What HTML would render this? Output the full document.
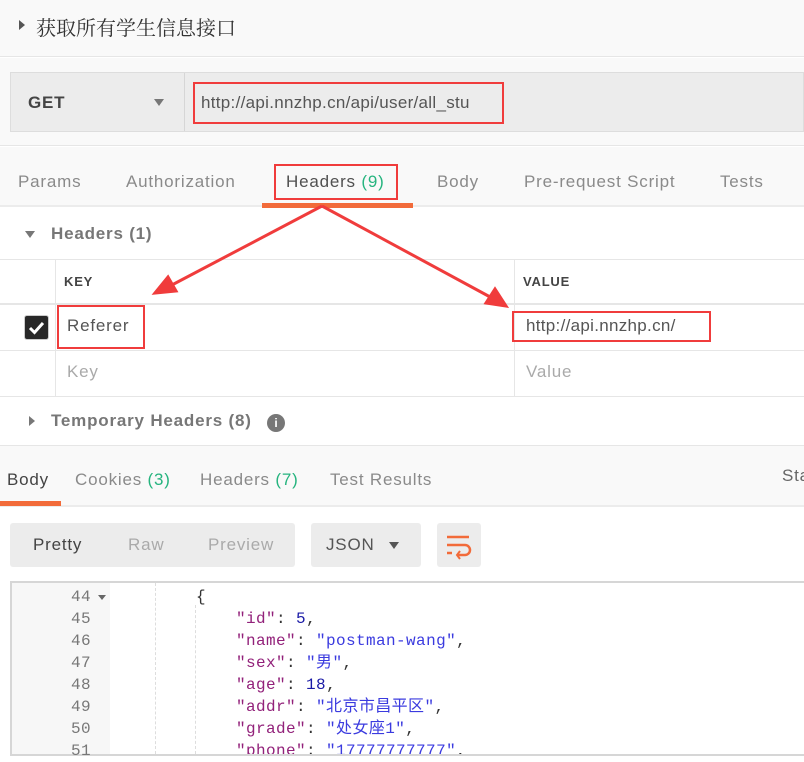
<!DOCTYPE html>
<html><head><meta charset="utf-8"><style>
*{margin:0;padding:0;box-sizing:border-box}
body{width:804px;height:758px;overflow:hidden;background:#fff;font-family:"Liberation Sans","Noto Sans CJK SC",sans-serif;position:relative;color:#505050;letter-spacing:0.8px}
.a{position:absolute;white-space:nowrap}
.red{position:absolute;border:2px solid #f03c3c}
.g{color:#26b47f}
.tab{font-size:17px;color:#8a8a8a;top:172px}
.code{font-family:"Liberation Mono","Noto Sans CJK SC",monospace;font-size:16px;line-height:22px;letter-spacing:0.4px}
.k{color:#92217a}.s{color:#3b3bdf}.n{color:#1a1aa6}
</style></head><body>
<div class="a" style="left:0;top:0;width:804px;height:57px;background:#f9f9f9;border-bottom:1px solid #e6e6e6"></div>
<div class="a" style="left:19px;top:20px;width:0;height:0;border-left:6px solid #555;border-top:5px solid transparent;border-bottom:5px solid transparent"></div>
<div class="a" style="left:36px;top:12px;font-size:20px;color:#333;letter-spacing:0;font-family:'Noto Serif CJK SC',serif">获取所有学生信息接口</div>
<div class="a" style="left:0;top:58px;width:804px;height:88px;background:#f9f9f9;border-bottom:1px solid #e6e6e6"></div>
<div class="a" style="left:10px;top:72px;width:794px;height:60px;background:#ececec;border:1px solid #ddd"></div>
<div class="a" style="left:184px;top:73px;width:1px;height:58px;background:#d6d6d6"></div>
<div class="a" style="left:28px;top:93px;font-size:17px;font-weight:bold;color:#444">GET</div>
<div class="a" style="left:154px;top:99px;border-top:7px solid #777;border-left:5px solid transparent;border-right:5px solid transparent"></div>
<div class="a" style="left:201px;top:93px;font-size:17px;color:#555;letter-spacing:0.3px">http://api.nnzhp.cn/api/user/all_stu</div>
<div class="red" style="left:193px;top:82px;width:311px;height:42px"></div>
<div class="a" style="left:0;top:147px;width:804px;height:60px;background:#f9f9f9;border-bottom:2px solid #ececec"></div>
<div class="a tab" style="left:18px">Params</div>
<div class="a tab" style="left:126px">Authorization</div>
<div class="a tab" style="left:286px;color:#505050">Headers <span class="g">(9)</span></div>
<div class="a tab" style="left:437px">Body</div>
<div class="a tab" style="left:524px">Pre-request Script</div>
<div class="a tab" style="left:720px">Tests</div>
<div class="a" style="left:262px;top:203px;width:151px;height:5px;background:#f26b3a"></div>
<div class="red" style="left:274px;top:164px;width:124px;height:36px"></div>
<div class="a" style="left:25px;top:231px;border-top:7px solid #777;border-left:5px solid transparent;border-right:5px solid transparent"></div>
<div class="a" style="left:51px;top:224px;font-size:17px;font-weight:bold;color:#777">Headers (1)</div>
<div class="a" style="left:0;top:259px;width:804px;height:1px;background:#e6e6e6"></div>
<div class="a" style="left:0;top:303px;width:804px;height:2px;background:#e6e6e6"></div>
<div class="a" style="left:0;top:350px;width:804px;height:1px;background:#e6e6e6"></div>
<div class="a" style="left:0;top:396px;width:804px;height:1px;background:#e6e6e6"></div>
<div class="a" style="left:55px;top:260px;width:1px;height:136px;background:#e6e6e6"></div>
<div class="a" style="left:514px;top:260px;width:1px;height:136px;background:#e6e6e6"></div>
<div class="a" style="left:64px;top:274px;font-size:13px;font-weight:bold;color:#444">KEY</div>
<div class="a" style="left:523px;top:274px;font-size:13px;font-weight:bold;color:#444">VALUE</div>
<div class="a" style="left:24px;top:315px;width:25px;height:25px;background:#282828;border-radius:3px;border:1px solid #ccc"></div>
<svg class="a" style="left:24px;top:315px" width="25" height="25"><path d="M6 13 L10.5 17.5 L19 8" stroke="#fff" stroke-width="3" fill="none"/></svg>
<div class="a" style="left:67px;top:316px;font-size:17px;color:#555">Referer</div>
<div class="red" style="left:57px;top:305px;width:88px;height:44px"></div>
<div class="a" style="left:526px;top:316px;font-size:17px;color:#555;letter-spacing:0.3px">http://api.nnzhp.cn/</div>
<div class="red" style="left:512px;top:311px;width:199px;height:31px"></div>
<div class="a" style="left:67px;top:362px;font-size:17px;color:#aaa">Key</div>
<div class="a" style="left:526px;top:362px;font-size:17px;color:#aaa">Value</div>
<div class="a" style="left:29px;top:416px;border-left:6px solid #777;border-top:5px solid transparent;border-bottom:5px solid transparent"></div>
<div class="a" style="left:51px;top:411px;font-size:17px;font-weight:bold;color:#777">Temporary Headers (8)</div>
<div class="a" style="left:267px;top:414px;width:18px;height:18px;border-radius:50%;background:#777;color:#fff;font-size:12px;font-weight:bold;text-align:center;line-height:18px;letter-spacing:0">i</div>
<div class="a" style="left:0;top:445px;width:804px;height:62px;background:#f9f9f9;border-top:1px solid #e6e6e6;border-bottom:2px solid #ececec"></div>
<div class="a" style="left:7px;top:470px;font-size:17px;color:#444">Body</div>
<div class="a" style="left:75px;top:470px;font-size:17px;color:#8a8a8a">Cookies <span class="g">(3)</span></div>
<div class="a" style="left:200px;top:470px;font-size:17px;color:#8a8a8a">Headers <span class="g">(7)</span></div>
<div class="a" style="left:330px;top:470px;font-size:17px;color:#8a8a8a">Test Results</div>
<div class="a" style="left:782px;top:466px;font-size:17px;color:#666">Sta</div>
<div class="a" style="left:0;top:501px;width:61px;height:5px;background:#f26b3a"></div>
<div class="a" style="left:10px;top:523px;width:285px;height:44px;background:#ececec;border-radius:3px"></div>
<div class="a" style="left:33px;top:535px;font-size:17px;color:#444">Pretty</div>
<div class="a" style="left:128px;top:535px;font-size:17px;color:#aaa">Raw</div>
<div class="a" style="left:208px;top:535px;font-size:17px;color:#aaa">Preview</div>
<div class="a" style="left:311px;top:523px;width:110px;height:44px;background:#ececec;border-radius:3px"></div>
<div class="a" style="left:326px;top:535px;font-size:17px;color:#555">JSON</div>
<div class="a" style="left:389px;top:542px;border-top:7px solid #555;border-left:5px solid transparent;border-right:5px solid transparent"></div>
<div class="a" style="left:437px;top:523px;width:44px;height:44px;background:#ececec;border-radius:3px"></div>
<svg class="a" style="left:437px;top:523px" width="44" height="44"><path d="M10 14h22M10 22h18a5 5 0 0 1 0 10h-7M10 30h5" stroke="#f26b3a" stroke-width="2.5" fill="none"/><path d="M23 28l-3 4 3 4" stroke="#f26b3a" stroke-width="2" fill="none"/></svg>
<div class="a" style="left:10px;top:581px;width:794px;height:175px;border:2px solid #d6d6d6;border-right:none;background:#fff"></div>
<div class="a" style="left:12px;top:583px;width:98px;height:171px;background:#f7f7f7"></div>
<div class="a" style="left:155px;top:583px;height:171px;border-left:1px dashed #ddd"></div>
<div class="a" style="left:195px;top:605px;height:149px;border-left:1px dashed #ddd"></div>
<div class="a code" style="left:40px;top:586px;width:51px;text-align:right;color:#777">44<br>45<br>46<br>47<br>48<br>49<br>50<br>51</div>
<div class="a" style="left:98px;top:595px;border-top:5px solid #666;border-left:4px solid transparent;border-right:4px solid transparent"></div>
<div class="a code" style="left:196px;top:586px;height:168px;overflow:hidden;color:#333">{<br>&nbsp;&nbsp;&nbsp;&nbsp;<span class="k">"id"</span>: <span class="n">5</span>,<br>&nbsp;&nbsp;&nbsp;&nbsp;<span class="k">"name"</span>: <span class="s">"postman-wang"</span>,<br>&nbsp;&nbsp;&nbsp;&nbsp;<span class="k">"sex"</span>: <span class="s">"男"</span>,<br>&nbsp;&nbsp;&nbsp;&nbsp;<span class="k">"age"</span>: <span class="n">18</span>,<br>&nbsp;&nbsp;&nbsp;&nbsp;<span class="k">"addr"</span>: <span class="s">"北京市昌平区"</span>,<br>&nbsp;&nbsp;&nbsp;&nbsp;<span class="k">"grade"</span>: <span class="s">"处女座1"</span>,<br>&nbsp;&nbsp;&nbsp;&nbsp;<span class="k">"phone"</span>: <span class="s">"17777777777"</span>,</div>
<svg class="a" style="left:0;top:0" width="804" height="758">
<g stroke="#f03c3c" stroke-width="3" fill="#f03c3c">
<line x1="322" y1="206" x2="170" y2="286"/>
<polygon points="155,293 168,277 176,291"/>
<line x1="322" y1="206" x2="492" y2="298"/>
<polygon points="506,306 486,303 495,289"/>
</g></svg>
</body></html>
